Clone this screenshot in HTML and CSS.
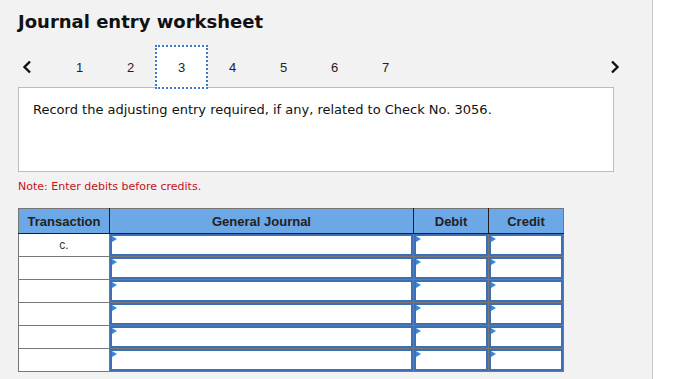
FILE: index.html
```html
<!DOCTYPE html>
<html lang="en">
<head>
    <meta charset="UTF-8">
    <title>Journal entry worksheet</title>
    <link rel="stylesheet" href="styles.css">
</head>
<body>
<div class="panel">
    <h1>Journal entry worksheet</h1>

    <div class="nav">
        <span class="arrow prev">
            <svg width="10" height="14" viewBox="0 0 10 14"><polyline points="8,1.5 2.5,7 8,12.5" fill="none" stroke="#111" stroke-width="2.4"/></svg>
        </span>
        <span class="tab">1</span>
        <span class="tab">2</span>
        <span class="tab active">3</span>
        <span class="tab">4</span>
        <span class="tab">5</span>
        <span class="tab">6</span>
        <span class="tab">7</span>
        <span class="arrow next">
            <svg width="10" height="14" viewBox="0 0 10 14"><polyline points="2,1.5 7.5,7 2,12.5" fill="none" stroke="#111" stroke-width="2.4"/></svg>
        </span>
    </div>

    <div class="question">Record the adjusting entry required, if any, related to Check No. 3056.</div>

    <div class="note">Note: Enter debits before credits.</div>

    <table class="journal">
        <thead>
        <tr>
            <th class="col-trans">Transaction</th>
            <th class="col-gj">General Journal</th>
            <th class="col-amt">Debit</th>
            <th class="col-amt">Credit</th>
        </tr>
        </thead>
        <tbody>
        <tr><td class="trans">c.</td><td><div class="field"></div></td><td><div class="field"></div></td><td><div class="field"></div></td></tr>
        <tr><td class="trans"></td><td><div class="field"></div></td><td><div class="field"></div></td><td><div class="field"></div></td></tr>
        <tr><td class="trans"></td><td><div class="field"></div></td><td><div class="field"></div></td><td><div class="field"></div></td></tr>
        <tr><td class="trans"></td><td><div class="field"></div></td><td><div class="field"></div></td><td><div class="field"></div></td></tr>
        <tr><td class="trans"></td><td><div class="field"></div></td><td><div class="field"></div></td><td><div class="field"></div></td></tr>
        <tr><td class="trans"></td><td><div class="field"></div></td><td><div class="field"></div></td><td><div class="field"></div></td></tr>
        </tbody>
    </table>
</div>
</body>
</html>
```

FILE: styles.css
```css
body { margin: 0; background: #fff; font-family: "DejaVu Sans", Verdana, sans-serif; }
.panel {
    width: 653px;
    height: 379px;
    box-sizing: border-box;
    background: #f2f2f2;
    border-right: 1px solid #c8c8c8;
    padding: 11px 0 0 18px;
}
h1 { margin: 0; font-size: 18px; line-height: 22px; font-weight: bold; color: #111; }

.nav {
    display: flex;
    align-items: center;
    height: 44px;
    margin-top: 12px;
    margin-bottom: -2px;
    padding-right: 32px;
    font-family: "Liberation Sans", Arial, sans-serif;
    font-size: 13px;
    color: #222;
}
.arrow { display: flex; align-items: center; }
.arrow.prev { width: 32px; padding-left: 4px; }
.arrow.next { margin-left: auto; }
.tab {
    width: 51px;
    height: 44px;
    box-sizing: border-box;
    border: 2px dotted transparent;
    display: flex;
    align-items: center;
    justify-content: center;
}
.tab.active {
    position: relative;
    z-index: 1;
    width: 53px;
    margin: 0 -1px;
    background: #fff;
    border-color: #3a78c8;
}

.question {
    width: 596px;
    height: 85px;
    box-sizing: border-box;
    background: #fff;
    border: 1px solid #bdbdbd;
    padding: 14px 14px;
    font-size: 13px;
    line-height: 16px;
    color: #111;
}
.note { margin-top: 8px; font-size: 11px; line-height: 14px; color: #c8101a; }

.journal {
    margin-top: 14px;
    border-collapse: collapse;
    border: 1px solid #777;
    font-family: "Liberation Sans", Arial, sans-serif;
}
.journal th {
    height: 24px;
    padding: 0;
    background: #6ca7e6;
    border-left: 1px solid #1e1e1e;
    border-bottom: 1px solid #1e1e1e;
    font-size: 13px;
    font-weight: bold;
    color: #222;
}
.journal th:first-child { border-left: none; }
.col-trans { width: 90px; }
.col-gj { width: 303px; }
.col-amt { width: 74px; }
.journal td {
    height: 22px;
    padding: 0;
    border: 1px solid #777;
    background: #fff;
}
.trans { text-align: center; font-size: 12px; color: #333; }
.field {
    position: relative;
    height: 22px;
    box-sizing: border-box;
    border: 2px solid #3d6fb4;
    background: #fff;
}
.field::before {
    content: "";
    position: absolute;
    left: 0;
    top: 0;
    border-top: 3px solid transparent;
    border-bottom: 3px solid transparent;
    border-left: 5px solid #3b86d9;
}
```
